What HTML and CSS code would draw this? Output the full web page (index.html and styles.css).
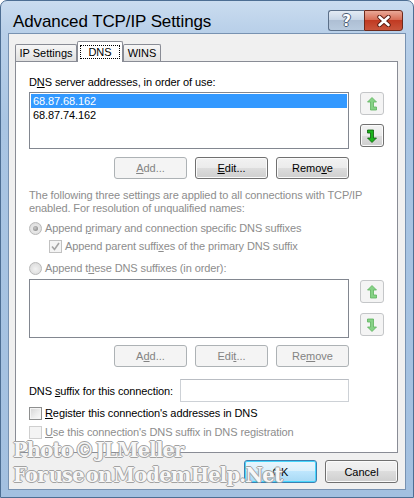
FILE: index.html
```html
<!DOCTYPE html>
<html lang="en">

<head>
  <meta charset="UTF-8">
  <meta name="viewport" content="width=device-width, initial-scale=1.0">
  <title>Advanced TCP/IP Settings</title>

  <link rel="stylesheet" href="styles.css">
</head>

<body>
  <div class="window">
    <div class="titlebar">
      <span class="title">Advanced TCP/IP Settings</span>
      <div class="caption">
        <button class="cap help">?</button>
        <button class="cap close">
          <svg width="14" height="12" viewBox="0 0 14 12">
            <path d="M2.5 2 L11.5 10 M11.5 2 L2.5 10" stroke="#5a1a10" stroke-width="4.4" stroke-linecap="round" />
            <path d="M2.5 2 L11.5 10 M11.5 2 L2.5 10" stroke="#fff" stroke-width="2.6" stroke-linecap="round" />
          </svg>
        </button>
      </div>
    </div>

    <div class="client">
      <div class="tabs">
        <div class="tab tab-ip">IP Settings</div>
        <div class="tab tab-dns active"><span class="focus">DNS</span></div>
        <div class="tab tab-wins">WINS</div>
      </div>

      <div class="panel">
        <label class="lbl">D<u>N</u>S server addresses, in order of use:</label>

        <div class="listrow">
          <div class="listbox">
            <div class="item selected">68.87.68.162</div>
            <div class="item">68.87.74.162</div>
          </div>
          <div class="arrows">
            <button class="arrow" disabled>
              <svg width="12" height="16" viewBox="0 0 12 16">
                <path d="M6 1.5 L10.5 6 H7.5 V11 H10.5 V14 H4.5 V6 H1.5 Z" />
              </svg>
            </button>
            <button class="arrow">
              <svg width="12" height="16" viewBox="0 0 12 16">
                <path d="M1.5 2 H7.5 V10 H10.5 L6 14.5 L1.5 10 H4.5 V5 H1.5 Z" />
              </svg>
            </button>
          </div>
        </div>

        <div class="btnrow">
          <button class="btn" disabled><u>A</u>dd...</button>
          <button class="btn"><u>E</u>dit...</button>
          <button class="btn">Remo<u>v</u>e</button>
        </div>

        <p class="note">The following three settings are applied to all connections with TCP/IP<br>enabled. For resolution of unqualified names:</p>

        <div class="opt opt-first off">
          <span class="radio checked"></span>
          <span>Append <u>p</u>rimary and connection specific DNS suffixes</span>
        </div>
        <div class="opt opt-sub off">
          <span class="check checked">
            <svg width="9" height="9" viewBox="0 0 9 9">
              <path d="M1 4.5 L3.5 7.5 L8 1" fill="none" stroke="#a4a4a4" stroke-width="1.6" />
            </svg>
          </span>
          <span>Append parent suffi<u>x</u>es of the primary DNS suffix</span>
        </div>
        <div class="opt opt-second off">
          <span class="radio"></span>
          <span>Append t<u>h</u>ese DNS suffixes (in order):</span>
        </div>

        <div class="listrow listrow-second">
          <div class="listbox"></div>
          <div class="arrows">
            <button class="arrow" disabled>
              <svg width="12" height="16" viewBox="0 0 12 16">
                <path d="M6 1.5 L10.5 6 H7.5 V11 H10.5 V14 H4.5 V6 H1.5 Z" />
              </svg>
            </button>
            <button class="arrow" disabled>
              <svg width="12" height="16" viewBox="0 0 12 16">
                <path d="M1.5 2 H7.5 V10 H10.5 L6 14.5 L1.5 10 H4.5 V5 H1.5 Z" />
              </svg>
            </button>
          </div>
        </div>

        <div class="btnrow btnrow-second">
          <button class="btn" disabled>A<u>d</u>d...</button>
          <button class="btn" disabled>Edi<u>t</u>...</button>
          <button class="btn" disabled>Re<u>m</u>ove</button>
        </div>

        <div class="suffix">
          <label>DNS <u>s</u>uffix for this connection:</label>
          <input type="text" class="textbox">
        </div>

        <div class="opt opt-reg">
          <span class="check"></span>
          <span><u>R</u>egister this connection's addresses in DNS</span>
        </div>
        <div class="opt opt-use off">
          <span class="check disabled"></span>
          <span><u>U</u>se this connection's DNS suffix in DNS registration</span>
        </div>
      </div>

      <div class="dialog-btns">
        <button class="btn default">OK</button>
        <button class="btn">Cancel</button>
      </div>
    </div>

    <div class="watermark">
      Photo © JLMeller<br>
      For use on ModemHelp.Net
    </div>
  </div>
</body>

</html>
```

FILE: styles.css
```css
body {
  margin: 0;
  background-color: #fff;
  font-family: 'Liberation Sans', Arial, sans-serif;
  font-size: 11px;
  color: #000;
}

button,
input,
label {
  font-family: inherit;
  font-size: 11px;
}

u {
  text-decoration-thickness: 1px;
  text-underline-offset: 1px;
}

.window {
  position: relative;
  display: flex;
  flex-direction: column;

  width: 414px;
  height: 498px;
  box-sizing: border-box;
  padding: 0 7px 7px;

  background: linear-gradient(180deg, #cadcef 0, #b9d0e9 30px, #a9c5e3 120px, #a3c0e0 100%);
  border: 1px solid #4d6e93;
  border-radius: 7px 7px 0 0;
}

/* title bar */

.titlebar {
  display: flex;
  justify-content: space-between;
  align-items: flex-start;

  height: 32px;
  padding: 0 3px 0 5px;
}

.title {
  padding-top: 11px;
  font-size: 17px;
  line-height: 19px;
  letter-spacing: -0.1px;
  color: #000;
}

.caption {
  display: flex;
  margin-top: 9px;
}

.cap {
  height: 21px;
  padding: 0;
  display: flex;
  justify-content: center;
  align-items: center;
  border: 1px solid #5b6f88;
}

.help {
  width: 36px;
  border-radius: 3px 0 0 3px;
  border-right: none;
  background: linear-gradient(180deg, #e3ebf4 0, #c9d7e7 45%, #aebfd4 50%, #b8cade 100%);

  font-family: 'DejaVu Sans', sans-serif;
  font-size: 15px;
  font-weight: bold;
  color: #fff;
  text-shadow: 1px 0 #4a5d75, -1px 0 #4a5d75, 0 1px #4a5d75, 0 -1px #4a5d75;
}

.close {
  width: 39px;
  border-radius: 0 3px 3px 0;
  border-color: #6e2a1c;
  background: linear-gradient(180deg, #e9a897 0, #d86f58 45%, #c13a22 50%, #c9553c 100%);
}

/* client area */

.client {
  flex: 1;
  display: flex;
  flex-direction: column;

  padding: 7px 7px 0 6px;

  background-color: #f0f0f0;
  border: 1px solid #7892b1;
}

.tabs {
  position: relative;
  z-index: 1;
  display: flex;
  align-items: flex-end;

  height: 21px;
  margin-bottom: -1px;
}

.tab {
  display: flex;
  justify-content: center;
  align-items: center;

  height: 17px;
  margin-bottom: 1px;
  box-sizing: border-box;

  background: linear-gradient(180deg, #f6f6f6 0, #ececec 50%, #e0e0e0 100%);
  border: 1px solid #898c95;
  border-bottom: none;
  border-radius: 2px 2px 0 0;
}

.tab-ip {
  width: 62px;
}

.tab-dns {
  width: 46px;
}

.tab-wins {
  width: 38px;
}

.tab.active {
  height: 21px;
  margin-bottom: 0;
  background: #fff;
}

.focus {
  padding: 0 7px;
  line-height: 12px;
  border: 1px dotted #000;
}

.panel {
  height: 392px;
  box-sizing: border-box;
  padding: 14px 13px 0;

  background-color: #fff;
  border: 1px solid #898c95;
  letter-spacing: -0.1px;
}

.lbl {
  display: block;
  line-height: 13px;
}

/* lists */

.listrow {
  display: flex;
  margin-top: 3px;
}

.listbox {
  width: 320px;
  height: 57px;
  box-sizing: border-box;
  padding: 1px;

  background-color: #fff;
  border: 1px solid #828790;
}

.listrow-second .listbox {
  height: 59px;
}

.item {
  line-height: 14px;
  padding-left: 2px;
}

.item.selected {
  background-color: #3399ff;
  color: #fff;
}

.arrows {
  display: flex;
  flex-direction: column;
  gap: 9px;
  margin-left: 11px;
}

.listrow-second .arrows {
  gap: 10px;
  padding-top: 1px;
}

.arrow {
  width: 24px;
  height: 23px;
  padding: 0;
  display: flex;
  justify-content: center;
  align-items: center;

  background: linear-gradient(180deg, #f2f2f2 0, #ebebeb 50%, #dddddd 50%, #cfcfcf 100%);
  border: 1px solid #707070;
  border-radius: 3px;
  box-shadow: inset 0 0 0 1px #fbfbfb;
}

.arrow svg path {
  fill: #1cb31c;
  stroke: #0b5e0b;
  stroke-width: 0.8;
}

.arrow:disabled {
  background: #f4f4f4;
  border-color: #c4c6c8;
  box-shadow: none;
}

.arrow:disabled svg path {
  fill: #86d286;
  stroke: #5db35d;
}

/* push buttons */

.btnrow {
  display: flex;
  justify-content: flex-end;
  gap: 8px;

  width: 320px;
  margin-top: 8px;
}

.btnrow-second {
  margin-top: 7px;
}

.btn {
  width: 73px;
  height: 22px;
  padding: 0;

  color: #000;
  background: linear-gradient(180deg, #f2f2f2 0, #ebebeb 50%, #dddddd 50%, #cfcfcf 100%);
  border: 1px solid #707070;
  border-radius: 3px;
  box-shadow: inset 0 0 0 1px #fbfbfb;
}

.btn:disabled {
  color: #838383;
  background: #f4f4f4;
  border-color: #adb2b5;
  box-shadow: none;
}

.btn.default {
  border-color: #3c7fb1;
  background: linear-gradient(180deg, #eaf6fd 0, #d9f0fc 50%, #bee6fd 50%, #a7d9f5 100%);
  box-shadow: inset 0 0 0 1px #48d6fc;
}

/* options */

.note {
  margin: 10px 0 0;
  line-height: 13px;
  color: #8d8d8d;
}

.opt {
  display: flex;
  align-items: center;
  gap: 3px;
  height: 16px;
}

.opt.off {
  color: #8d8d8d;
}

.opt-first {
  margin-top: 5px;
}

.opt-sub {
  margin-top: 2px;
  margin-left: 20px;
}

.opt-second {
  margin-top: 6px;
}

.opt-reg {
  margin-top: 3px;
}

.opt-use {
  margin-top: 3px;
}

.radio {
  display: flex;
  justify-content: center;
  align-items: center;

  width: 13px;
  height: 13px;
  box-sizing: border-box;

  background: radial-gradient(circle at 50% 55%, #f2f2f2 0, #dedede 70%, #d2d2d2 100%);
  border: 1px solid #b8b8b8;
  border-radius: 50%;
}

.radio.checked::after {
  content: '';
  width: 5px;
  height: 5px;
  border-radius: 50%;
  background: radial-gradient(circle at 40% 40%, #c8c8c8, #7c7c7c);
}

.check {
  display: flex;
  justify-content: center;
  align-items: center;

  width: 13px;
  height: 13px;
  box-sizing: border-box;

  background: linear-gradient(135deg, #d4d4d4 0, #eeeeee 60%, #fafafa 100%);
  border: 1px solid #8e8f8f;
  box-shadow: inset 0 0 0 1px #f4f4f4;
}

.check.checked {
  background: #f4f4f4;
  border-color: #c1c1c1;
}

.check.disabled {
  background: #f4f4f4;
  border-color: #cfcfcf;
  box-shadow: none;
}

.suffix {
  display: flex;
  justify-content: space-between;
  align-items: center;

  width: 320px;
  margin-top: 12px;
}

.textbox {
  width: 169px;
  height: 23px;
  box-sizing: border-box;
  padding: 0 3px;

  border: 1px solid #cdd1d6;
  border-top-color: #b9bdc3;
}

.dialog-btns {
  display: flex;
  justify-content: flex-end;
  gap: 8px;
  margin-top: 7px;
}

.dialog-btns .btn {
  height: 23px;
}

/* photo credit over the dialog */

.watermark {
  position: absolute;
  left: 12px;
  top: 437px;

  font-family: 'DejaVu Serif', serif;
  font-size: 19.5px;
  font-weight: bold;
  line-height: 25px;
  letter-spacing: -0.8px;
  word-spacing: -4px;

  color: #f7f7f7;
  text-shadow: 1px 0 #a2a2a2, -1px 0 #a2a2a2, 0 1px #a2a2a2, 0 -1px #a2a2a2;
  pointer-events: none;
}
```
